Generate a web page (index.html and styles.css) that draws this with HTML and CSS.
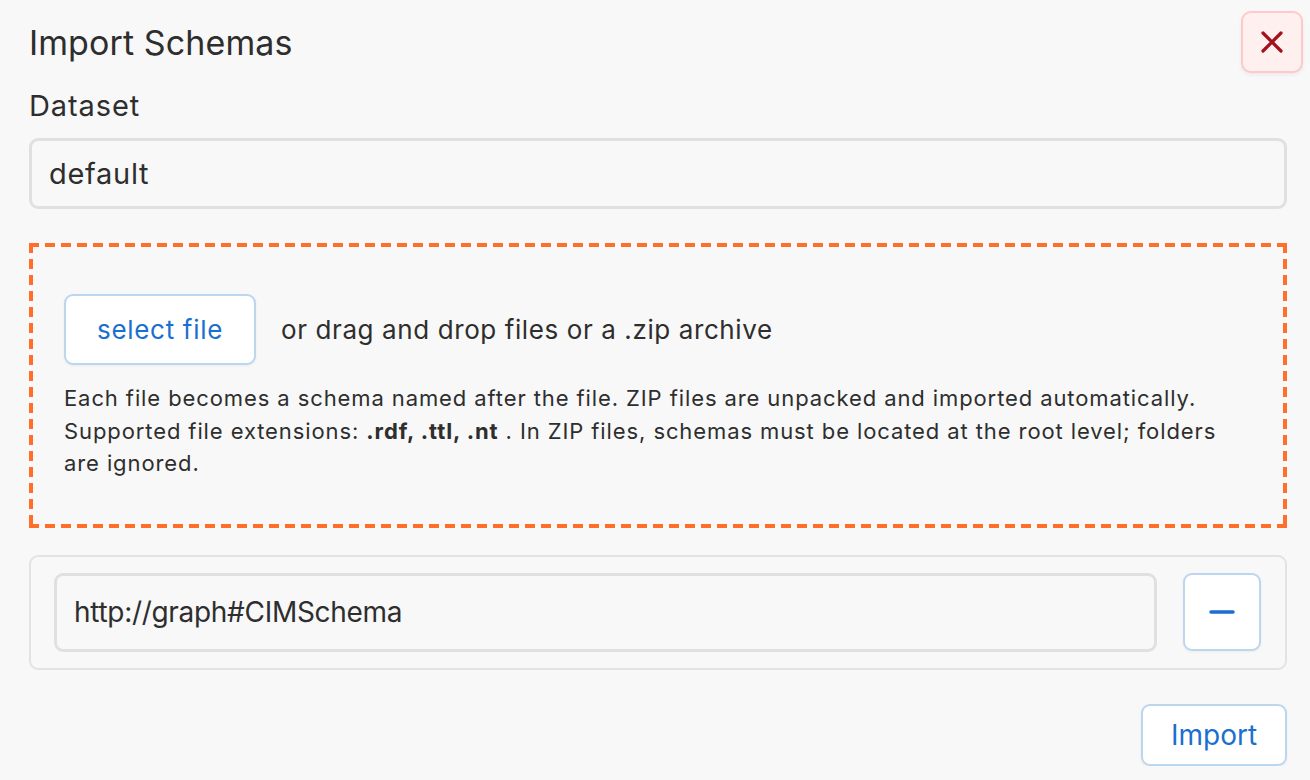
FILE: index.html
```html
<!DOCTYPE html>
<html lang="en">
<head>
  <meta charset="UTF-8" />
  <title>Import Schemas</title>
  <link rel="stylesheet" href="styles.css">
</head>
<body>
  <div class="dialog">
    <div class="dialog-head">
      <h1>Import Schemas</h1>
      <button type="button" class="close-btn" aria-label="Close">
        <svg width="24" height="24" viewBox="0 0 24 24"><path d="M3 3 L21 21 M21 3 L3 21" stroke="#a5111b" stroke-width="3.2" stroke-linecap="round"/></svg>
      </button>
    </div>

    <label class="field-label" for="dataset">Dataset</label>
    <input type="text" id="dataset" class="text-input" value="default" />

    <div class="dropzone">
      <div class="drop-row">
        <button type="button" class="btn">select file</button>
        <span>or drag and drop files or a .zip archive</span>
      </div>
      <p class="hint">Each file becomes a schema named after the file. ZIP files are unpacked and imported automatically. Supported file extensions: <b>.rdf, .ttl, .nt</b> . In ZIP files, schemas must be located at the root level; folders are ignored.</p>
    </div>

    <div class="schema-list">
      <div class="schema-row">
        <input type="text" class="text-input schema-input" value="http://graph#CIMSchema" />
        <button type="button" class="btn icon-btn" aria-label="Remove">
          <svg width="26" height="6" viewBox="0 0 26 6"><path d="M2 3 L24 3" stroke="#1b6fcf" stroke-width="3.5" stroke-linecap="round"/></svg>
        </button>
      </div>
    </div>

    <div class="dialog-foot">
      <button type="button" class="btn import-btn">Import</button>
    </div>
  </div>
</body>
</html>
```

FILE: styles.css
```css
* {
  margin: 0; padding: 0; box-sizing: border-box;
}
body {
  font-family: Inter, "Noto Sans", sans-serif;
  background-color: #f8f8f8;
  color: #2e2e2e;
}
.dialog {
  padding: 11px 23px 0 29px;
}
.dialog-head {
  display: flex;
  justify-content: space-between;
  align-items: flex-start;
  margin-right: -16px;
}
.dialog-head h1 {
  font-size: 34px;
  font-weight: 400;
  line-height: 40px;
  margin-top: 12px;
  letter-spacing: 0.1px;
}
.close-btn {
  width: 62px;
  height: 62px;
  border: 2px solid #ffc9c9;
  border-radius: 10px;
  background-color: #fff0f0;
  box-shadow: 0 2px 4px rgba(0,0,0,0.06);
  display: flex;
  align-items: center;
  justify-content: center;
  cursor: pointer;
}
.field-label {
  display: block;
  font-size: 29px;
  line-height: 40px;
  margin-top: 13px;
  letter-spacing: 0.9px;
}
.text-input {
  display: block;
  width: 100%;
  height: 71px;
  margin-top: 12px;
  padding: 0 17px;
  border: 3px solid #e0e0e0;
  border-radius: 9px;
  background-color: #f8f8f8;
  font-family: inherit;
  font-size: 29px;
  letter-spacing: 0.7px;
  color: #2e2e2e;
  outline: none;
}
/* dashed frame drawn with gradients to get the longer dashes */
.dropzone {
  margin-top: 34px;
  padding: 51px 35px 48px;
  background:
    repeating-linear-gradient(90deg, #ff6f29 0 10px, transparent 10px 16px) top left / 100% 4px no-repeat,
    repeating-linear-gradient(90deg, #ff6f29 0 10px, transparent 10px 16px) bottom left / 100% 4px no-repeat,
    repeating-linear-gradient(180deg, #ff6f29 0 10px, transparent 10px 16px) top left / 4px 100% no-repeat,
    repeating-linear-gradient(180deg, #ff6f29 0 10px, transparent 10px 16px) top right / 4px 100% no-repeat;
}
.drop-row {
  display: flex;
  align-items: center;
  gap: 25px;
  font-size: 26px;
  letter-spacing: 0.6px;
}
.btn {
  background-color: #fff;
  border: 2px solid #bcd6f0;
  border-radius: 9px;
  color: #1b6fcf;
  font-family: inherit;
  cursor: pointer;
  box-shadow: 0 1px 3px rgba(0,0,0,0.05);
}
.drop-row .btn {
  width: 192px;
  height: 71px;
  font-size: 26px;
  letter-spacing: 0.7px;
}
.hint {
  margin-top: 17px;
  font-size: 22px;
  line-height: 32.5px;
  letter-spacing: 0.9px;
}
.hint b {
  font-weight: 700;
}
.schema-list {
  margin-top: 27px;
  border: 2px solid #e3e3e3;
  border-radius: 9px;
  padding: 16px 24px 16px 23px;
}
.schema-row {
  display: flex;
  align-items: center;
  gap: 26px;
}
.schema-input {
  flex: 1;
  height: 79px;
  margin-top: 0;
  font-size: 28px;
  letter-spacing: -0.3px;
}
.icon-btn {
  width: 78px;
  height: 78px;
  display: flex;
  align-items: center;
  justify-content: center;
}
.dialog-foot {
  display: flex;
  justify-content: flex-end;
  margin-top: 34px;
}
.import-btn {
  width: 146px;
  height: 62px;
  font-size: 28px;
}
```
